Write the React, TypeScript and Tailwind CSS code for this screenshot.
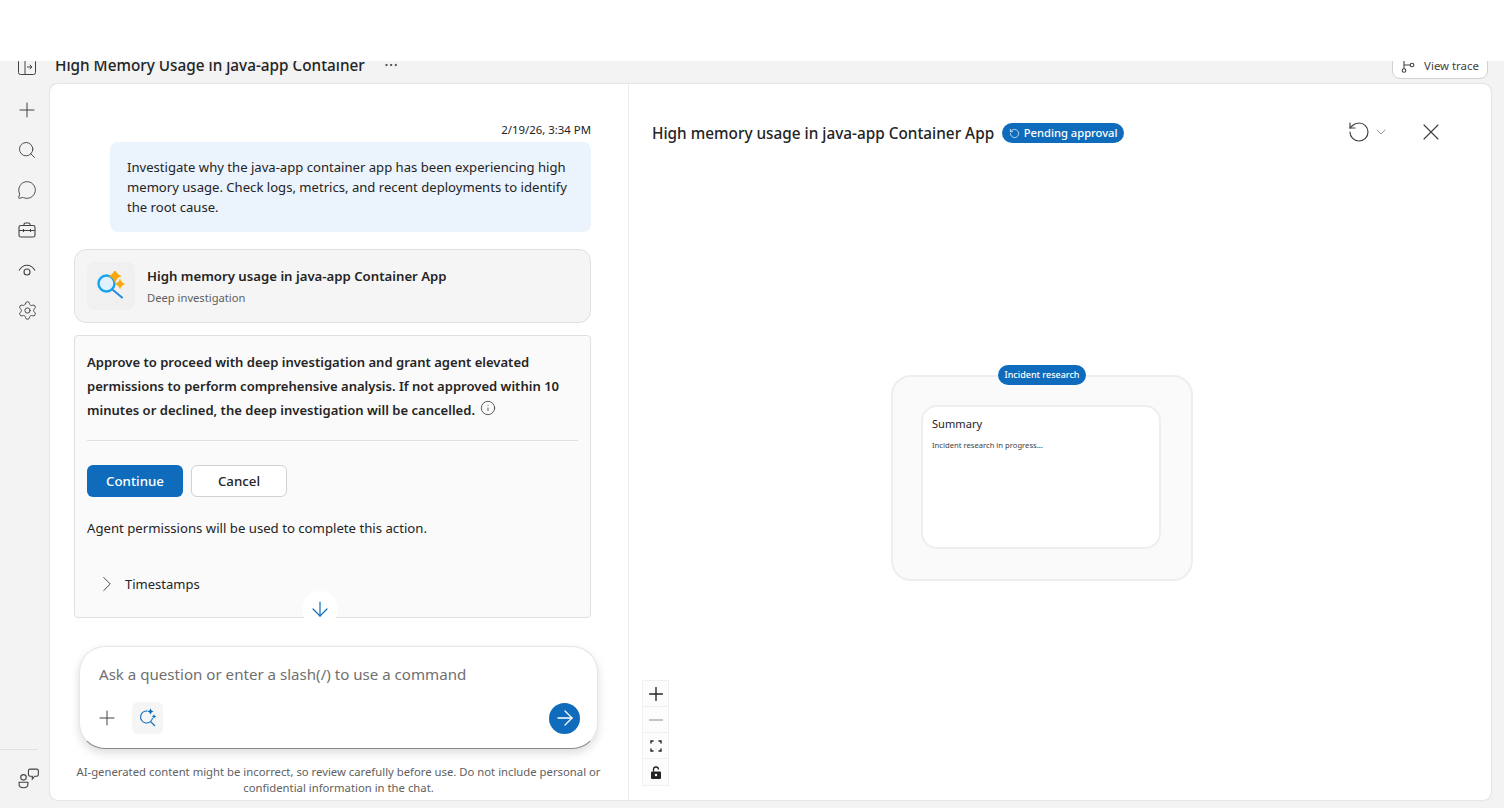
import { ArrowDown, ArrowRight, ChevronDown, ChevronRight, Ellipsis, Info, MessageCircle, Minus, Plus, RotateCcw, Search, Settings, X } from "lucide-react";

const NavIcon = ({ children }: { children: React.ReactNode }) => (
  <div className="flex h-[40px] w-[50px] items-center justify-center pl-[4px] text-[#424242]">{children}</div>
);

const Sparkle = ({ x, y, r, fill }: { x: number; y: number; r: number; fill: string }) => (
  <path
    d={`M${x} ${y - r}Q${x + r * 0.2} ${y - r * 0.2} ${x + r} ${y}Q${x + r * 0.2} ${y + r * 0.2} ${x} ${y + r}Q${x - r * 0.2} ${y + r * 0.2} ${x - r} ${y}Q${x - r * 0.2} ${y - r * 0.2} ${x} ${y - r}Z`}
    fill={fill}
    stroke="none"
  />
);

function Sidebar() {
  return (
    <aside className="flex w-[50px] shrink-0 flex-col">
      <div className="-mt-[10px] flex h-[32px] w-[50px] items-center justify-center pl-[4px] text-[#424242]">
        <svg width="18" height="16" viewBox="0 0 18 16" fill="none" stroke="currentColor" strokeWidth="1">
          <rect x="0.5" y="0.5" width="17" height="15" rx="2" />
          <path d="M7 1v14M9 8h5M11.800 5.800 14 8l-2.200 2.200" />
        </svg>
      </div>
      <div className="mt-[7px] flex flex-col">
        <NavIcon><Plus size={24} strokeWidth={1} /></NavIcon>
        <NavIcon><Search size={20} strokeWidth={1.100} /></NavIcon>
        <NavIcon><MessageCircle size={20} strokeWidth={1.100} /></NavIcon>
        <NavIcon>
          <svg width="18" height="16" viewBox="0 0 18 16" fill="none" stroke="currentColor" strokeWidth="1.100">
            <rect x="1" y="3.500" width="16" height="11.500" rx="1.800" />
            <path d="M6 3.500V2.300C6 1.500 6.500 1 7.300 1h3.400c.8 0 1.300.5 1.300 1.300v1.200M1 8.500h16M5.500 7v3M12.500 7v3" />
          </svg>
        </NavIcon>
        <NavIcon>
          <svg width="18" height="13" viewBox="0 0 18 13" fill="none" stroke="currentColor" strokeWidth="1.100">
            <path d="M1 6.500C3 3 6 1.200 9 1.200s6 1.800 8 5.300" />
            <circle cx="9" cy="8" r="3" />
          </svg>
        </NavIcon>
        <NavIcon><Settings size={21} strokeWidth={1.100} /></NavIcon>
      </div>
      <div className="mb-[8px] mt-auto flex h-[51px] w-[38px] items-center border-t border-[#e0e0e0] pl-[18px] pt-[8px] text-[#424242]">
        <svg className="shrink-0" width="22" height="22" viewBox="0 0 20 20" fill="none" stroke="currentColor" strokeWidth="1">
          <circle cx="5" cy="8.500" r="2.500" />
          <path d="M1 13h8v1.500c0 2.200-1.500 3.500-4 3.500s-4-1.300-4-3.500z" />
          <path d="M9.500 2.500c0-.8.700-1.500 1.500-1.500h6c.8 0 1.500.7 1.500 1.500v3.500c0 .8-.7 1.500-1.500 1.500h-1.800L13 10V7.500h-2C10.200 7.500 9.500 6.800 9.500 6z" />
        </svg>
      </div>
    </aside>
  );
}

function Header() {
  return (
    <header className="flex h-[23px] shrink-0 items-center justify-between pr-[16px]">
      <div className="-mt-[16px] flex items-center pl-[5px]">
        <span className="text-[15.300px] font-medium leading-[20px] text-[#242424]">High Memory Usage in java-app Container</span>
        <Ellipsis size={16} strokeWidth={1.500} className="ml-[18px] text-[#424242]" />
      </div>
      <button className="-mt-[25px] flex h-[38px] w-[96px] items-end justify-center gap-[9px] rounded-[8px] border border-[#d1d1d1] bg-white pb-[5px] text-[11.400px] leading-[14px] text-[#424242]">
        <svg width="14" height="13" viewBox="0 0 14 13" fill="none" stroke="currentColor" strokeWidth="1.100">
          <circle cx="3" cy="10.500" r="1.800" />
          <circle cx="11" cy="5" r="1.800" />
          <path d="M3 8.700V0M3 5h6.200" />
        </svg>
        View trace
      </button>
    </header>
  );
}

function ChatPane() {
  return (
    <section className="relative flex w-[579px] shrink-0 flex-col border-r border-[#ebebeb]">
      <div className="flex flex-col pl-[24px] pr-[37px] pt-[38px]">
        <div className="text-right text-[11.400px] leading-[16px] text-[#242424]">2/19/26, 3:34 PM</div>
        <div className="ml-[36px] mt-[4px] rounded-[8px] bg-[#ebf3fc] px-[17px] py-[15px] text-[13.100px] leading-[20px] text-[#242424]">
          Investigate why the java-app container app has been experiencing high memory usage. Check logs, metrics, and recent deployments to identify the root cause.
        </div>
        <div className="mt-[17px] flex h-[74px] items-center gap-[12px] rounded-[12px] border border-[#e0e0e0] bg-[#f5f5f5] pl-[12px]">
          <div className="flex h-[48px] w-[48px] items-center justify-center rounded-[8px] bg-[#f0f0f0]">
            <svg width="30" height="30" viewBox="0 0 30 30" fill="none">
              <circle cx="10.500" cy="12.500" r="8" fill="#dff1fd" stroke="#14a3ee" strokeWidth="2.400" />
              <path d="M17 19l9 7.500" stroke="#2b88d8" strokeWidth="2" strokeLinecap="round" />
              <Sparkle x={19} y={5} r={7} fill="#f7a80d" />
              <Sparkle x={24} y={13} r={5.500} fill="#f7a80d" />
            </svg>
          </div>
          <div className="-mt-[1px] flex flex-col">
            <span className="text-[13.200px] font-semibold leading-[20px] text-[#242424]">High memory usage in java-app Container App</span>
            <span className="mt-[4px] text-[11.200px] leading-[16px] text-[#616161]">Deep investigation</span>
          </div>
        </div>
        <div className="relative mt-[12px] h-[283px] rounded-[4px] border border-[#e0e0e0] bg-[#fafafa] px-[12px] pt-[14px]">
          <p className="text-[13.060px] font-semibold leading-[24px] text-[#242424]">
            Approve to proceed with deep investigation and grant agent elevated permissions to perform comprehensive analysis. If not approved within 10 minutes or declined, the deep investigation will be cancelled.
            <Info size={16} strokeWidth={1.100} className="ml-[5px] inline-block -translate-y-[3px] text-[#242424]" />
          </p>
          <div className="mt-[18px] border-t border-[#e0e0e0]" />
          <div className="mt-[24px] flex gap-[8px]">
            <button className="h-[32px] w-[96px] rounded-[6px] bg-[#0f6cbd] pt-[1px] text-[13.300px] font-medium text-white">Continue</button>
            <button className="h-[32px] w-[96px] rounded-[6px] border border-[#d1d1d1] bg-white pt-[1px] text-[13.300px] font-medium text-[#242424]">Cancel</button>
          </div>
          <p className="mt-[21px] text-[13.180px] leading-[20px] text-[#242424]">Agent permissions will be used to complete this action.</p>
          <div className="mt-[33px] flex items-center gap-[5px] pl-[7px] text-[13px] leading-[20px] text-[#242424]">
            <ChevronRight size={26} strokeWidth={0.900} className="text-[#424242]" />
            Timestamps
          </div>
          <div className="absolute -bottom-[10px] left-[227px] flex h-[36px] w-[36px] items-center justify-center rounded-full bg-white text-[#0f6cbd]">
            <ArrowDown size={24} strokeWidth={1.200} />
          </div>
        </div>
      </div>
      <div className="ml-[29px] mr-[30px] mt-[28px] flex h-[103px] flex-col rounded-[26px] border border-[#e6e6e6] border-b-[#8a8a8a] bg-white px-[19px] pt-[16px] shadow-[0_4px_10px_rgba(0,0,0,0.14)]">
        <div className="text-[15.100px] leading-[22px] text-[#707070]">Ask a question or enter a slash(/) to use a command</div>
        <div className="mt-[17px] flex items-center">
          <Plus size={24} strokeWidth={1} className="-ml-[4px] text-[#424242]" />
          <div className="ml-[13px] flex h-[32px] w-[31px] items-center justify-center rounded-[6px] bg-[#f5f5f5]">
            <svg width="20" height="20" viewBox="0 0 20 20" fill="none" stroke="#0f6cbd" strokeWidth="1.100">
              <path d="M9.500 3.100A6 6 0 1 0 14.500 10" />
              <path d="M12.500 13.500 17 18" />
              <Sparkle x={12.500} y={3.500} r={3} fill="#0f6cbd" />
              <Sparkle x={16} y={8.500} r={2.200} fill="#0f6cbd" />
            </svg>
          </div>
          <div className="-mr-[2px] ml-auto flex h-[31px] w-[31px] items-center justify-center rounded-full bg-[#0f6cbd] text-white">
            <ArrowRight size={24} strokeWidth={1.300} />
          </div>
        </div>
      </div>
      <p className="ml-[24px] mr-[25px] mt-[15px] text-center text-[11.300px] leading-[16px] text-[#616161]">
        AI-generated content might be incorrect, so review carefully before use. Do not include personal or confidential information in the chat.
      </p>
    </section>
  );
}

function CanvasNode() {
  return (
    <div className="absolute left-[262px] top-[291px] h-[206px] w-[302px] rounded-[20px] border-2 border-[#eeeeee] bg-[#fafafa]">
      <div className="absolute -top-[12px] left-[105px] flex h-[20px] w-[88px] items-center justify-center rounded-full bg-[#0f6cbd] text-[9px] font-medium text-white">
        Incident research
      </div>
      <div className="absolute left-[28px] top-[28px] h-[144px] w-[240px] rounded-[16px] border-2 border-[#eeeeee] bg-white px-[9px] pt-[8px]">
        <div className="text-[11.100px] leading-[18px] text-[#242424]">Summary</div>
        <div className="mt-[6px] text-[7.650px] leading-[12px] text-[#424242]">Incident research in progress...</div>
      </div>
    </div>
  );
}

function ZoomControls() {
  return (
    <div className="absolute bottom-[14px] left-[13px] flex w-[27px] flex-col border border-[#f0f0f0] bg-[#fcfcfc]">
      <div className="flex h-[26px] items-center justify-center border-b border-[#eeeeee] text-[#242424]"><Plus size={22} strokeWidth={1.500} /></div>
      <div className="flex h-[26px] items-center justify-center border-b border-[#eeeeee] text-[#b0b0b0]"><Minus size={22} strokeWidth={1.500} /></div>
      <div className="flex h-[26px] items-center justify-center border-b border-[#eeeeee]">
        <svg width="12" height="12" viewBox="0 0 12 12" fill="none" stroke="#242424" strokeWidth="1.400">
          <path d="M1 3.500V1h2.500M8.500 1H11v2.500M11 8.500V11H8.500M3.500 11H1V8.500" />
        </svg>
      </div>
      <div className="flex h-[26px] items-center justify-center text-[#242424]">
        <svg width="12" height="13" viewBox="0 0 12 13" fill="currentColor">
          <path d="M2 5.500h8a1 1 0 0 1 1 1V12a1 1 0 0 1-1 1H2a1 1 0 0 1-1-1V6.500a1 1 0 0 1 1-1Z" />
          <path d="M3.500 5.500V3.500a2.500 2.500 0 0 1 5 0" fill="none" stroke="currentColor" strokeWidth="1.300" />
          <circle cx="6" cy="9" r="1.200" fill="#fcfcfc" />
        </svg>
      </div>
    </div>
  );
}

function DetailPane() {
  return (
    <section className="relative flex-1">
      <div className="flex items-center pl-[23px] pr-[46px] pt-[36px]">
        <h2 className="text-[15.330px] font-medium leading-[22px] text-[#242424]">High memory usage in java-app Container App</h2>
        <span className="ml-[8px] flex h-[20px] w-[122px] items-center justify-center gap-[4px] rounded-full bg-[#0f6cbd] text-[11.200px] font-medium text-white">
          <RotateCcw size={11} strokeWidth={1.500} />
          Pending approval
        </span>
        <RotateCcw size={24} strokeWidth={1.200} className="-mt-[2px] ml-auto text-[#424242]" />
        <ChevronDown size={16} strokeWidth={1} className="-mt-[2px] ml-[2px] text-[#616161]" />
        <X size={28} strokeWidth={1} className="-mt-[2px] ml-[28px] text-[#424242]" />
      </div>
      <CanvasNode />
      <ZoomControls />
    </section>
  );
}

export default function App() {
  return (
    <div className="flex h-[808px] w-[1504px] flex-col overflow-hidden bg-white font-['Noto_Sans','Open_Sans',sans-serif]">
      <div className="h-[61px] shrink-0 bg-white" />
      <div className="flex min-h-0 flex-1 overflow-hidden bg-[#f3f3f3]">
        <Sidebar />
        <div className="flex min-w-0 flex-1 flex-col">
          <Header />
          <main className="mb-[8px] mr-[13px] flex min-h-0 flex-1 overflow-hidden rounded-[8px] bg-white shadow-[0_0_2px_rgba(0,0,0,0.2)]">
            <ChatPane />
            <DetailPane />
          </main>
        </div>
      </div>
    </div>
  );
}
